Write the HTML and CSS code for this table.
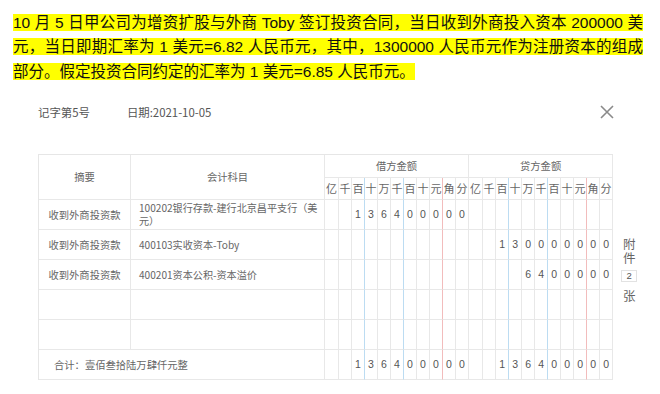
FILE: index.html
```html
<!DOCTYPE html>
<html lang="zh-CN">
<head>
<meta charset="utf-8">
<link rel="stylesheet" href="styles.css">
</head>
<body>
<div class="question">
  <div class="qline full"><span class="hl">10 月 5 日甲公司为增资扩股与外商 Toby 签订投资合同，当日收到外商投入资本 200000 美</span></div>
  <div class="qline full"><span class="hl">元，当日即期汇率为 1 美元=6.82 人民币元，其中，1300000 人民币元作为注册资本的组成</span></div>
  <div class="qline"><span class="hl">部分。假定投资合同约定的汇率为 1 美元=6.85 人民币元。</span></div>
</div>

<div class="vhead">
  <div class="vinfo">
    <span>记字第5号</span>
    <span>日期:2021-10-05</span>
  </div>
  <svg class="close" width="14" height="14" viewBox="0 0 14 14"><path d="M1 1L13 13M13 1L1 13" stroke="#8a8a8a" stroke-width="1.6" fill="none"/></svg>
</div>

<div class="vbody">
  <table class="grid">
    <colgroup>
      <col class="c-sum"><col class="c-subj">
      <col class="c-d1"><col class="c-d"><col class="c-d"><col class="c-d"><col class="c-d"><col class="c-d"><col class="c-d"><col class="c-d"><col class="c-d"><col class="c-d"><col class="c-d">
      <col class="c-d1"><col class="c-d"><col class="c-d"><col class="c-d"><col class="c-d"><col class="c-d"><col class="c-d"><col class="c-d"><col class="c-d"><col class="c-d"><col class="c-d">
    </colgroup>
    <tr class="h1">
      <td class="t" rowspan="2">摘要</td>
      <td class="t" rowspan="2">会计科目</td>
      <td class="t" colspan="11">借方金额</td>
      <td class="t" colspan="11">贷方金额</td>
    </tr>
    <tr class="h2">
      <td class="d">亿</td><td class="d">千</td><td class="d b">百</td><td class="d">十</td><td class="d">万</td><td class="d b">千</td><td class="d">百</td><td class="d">十</td><td class="d r">元</td><td class="d">角</td><td class="d">分</td>
      <td class="d">亿</td><td class="d">千</td><td class="d b">百</td><td class="d">十</td><td class="d">万</td><td class="d b">千</td><td class="d">百</td><td class="d">十</td><td class="d r">元</td><td class="d">角</td><td class="d">分</td>
    </tr>
    <tr class="row">
      <td class="sum">收到外商投资款</td>
      <td class="subj">100202银行存款-建行北京昌平支行（美元）</td>
      <td class="d"></td><td class="d"></td><td class="d b">1</td><td class="d">3</td><td class="d">6</td><td class="d b">4</td><td class="d">0</td><td class="d">0</td><td class="d r">0</td><td class="d">0</td><td class="d">0</td>
      <td class="d"></td><td class="d"></td><td class="d b"></td><td class="d"></td><td class="d"></td><td class="d b"></td><td class="d"></td><td class="d"></td><td class="d r"></td><td class="d"></td><td class="d"></td>
    </tr>
    <tr class="row">
      <td class="sum">收到外商投资款</td>
      <td class="subj">400103实收资本-Toby</td>
      <td class="d"></td><td class="d"></td><td class="d b"></td><td class="d"></td><td class="d"></td><td class="d b"></td><td class="d"></td><td class="d"></td><td class="d r"></td><td class="d"></td><td class="d"></td>
      <td class="d"></td><td class="d"></td><td class="d b">1</td><td class="d">3</td><td class="d">0</td><td class="d b">0</td><td class="d">0</td><td class="d">0</td><td class="d r">0</td><td class="d">0</td><td class="d">0</td>
    </tr>
    <tr class="row">
      <td class="sum">收到外商投资款</td>
      <td class="subj">400201资本公积-资本溢价</td>
      <td class="d"></td><td class="d"></td><td class="d b"></td><td class="d"></td><td class="d"></td><td class="d b"></td><td class="d"></td><td class="d"></td><td class="d r"></td><td class="d"></td><td class="d"></td>
      <td class="d"></td><td class="d"></td><td class="d b"></td><td class="d"></td><td class="d">6</td><td class="d b">4</td><td class="d">0</td><td class="d">0</td><td class="d r">0</td><td class="d">0</td><td class="d">0</td>
    </tr>
    <tr class="row">
      <td class="sum"></td>
      <td class="subj"></td>
      <td class="d"></td><td class="d"></td><td class="d b"></td><td class="d"></td><td class="d"></td><td class="d b"></td><td class="d"></td><td class="d"></td><td class="d r"></td><td class="d"></td><td class="d"></td>
      <td class="d"></td><td class="d"></td><td class="d b"></td><td class="d"></td><td class="d"></td><td class="d b"></td><td class="d"></td><td class="d"></td><td class="d r"></td><td class="d"></td><td class="d"></td>
    </tr>
    <tr class="row">
      <td class="sum"></td>
      <td class="subj"></td>
      <td class="d"></td><td class="d"></td><td class="d b"></td><td class="d"></td><td class="d"></td><td class="d b"></td><td class="d"></td><td class="d"></td><td class="d r"></td><td class="d"></td><td class="d"></td>
      <td class="d"></td><td class="d"></td><td class="d b"></td><td class="d"></td><td class="d"></td><td class="d b"></td><td class="d"></td><td class="d"></td><td class="d r"></td><td class="d"></td><td class="d"></td>
    </tr>
    <tr class="row total">
      <td class="tot" colspan="2">合计：壹佰叁拾陆万肆仟元整</td>
      <td class="d"></td><td class="d"></td><td class="d b">1</td><td class="d">3</td><td class="d">6</td><td class="d b">4</td><td class="d">0</td><td class="d">0</td><td class="d r">0</td><td class="d">0</td><td class="d">0</td>
      <td class="d"></td><td class="d"></td><td class="d b">1</td><td class="d">3</td><td class="d">6</td><td class="d b">4</td><td class="d">0</td><td class="d">0</td><td class="d r">0</td><td class="d">0</td><td class="d">0</td>
    </tr>
  </table>
  <div class="attach">
    <div class="ac">附</div>
    <div class="ac">件</div>
    <div class="count">2</div>
    <div class="ac">张</div>
  </div>
</div>
</body>
</html>
```

FILE: styles.css
```css
html, body {
  margin: 0;
  padding: 0;
  background: #ffffff;
}

body {
  font-family: "Noto Sans CJK SC", "Liberation Sans", sans-serif;
  color: #333;
}

.question {
  width: 630px;
  padding: 11px 0 0 13px;
  font-family: "Liberation Sans", "Noto Sans CJK SC", sans-serif;
  font-size: 15.5px;
  line-height: 24.3px;
  color: #111;
}

.qline {
  white-space: nowrap;
}

.qline.full {
  text-align: justify;
  text-align-last: justify;
}

.hl {
  background: #ffff00;
}

.vhead {
  display: flex;
  align-items: center;
  justify-content: space-between;
  height: 14px;
  margin-top: 21px;
  padding: 0 46px 0 38px;
}

.vinfo {
  display: flex;
  gap: 37px;
  font-size: 11.4px;
  color: #555;
}

.close {
  display: block;
}

.vbody {
  display: flex;
  align-items: flex-start;
  margin-top: 35px;
  padding-left: 38px;
}

.grid {
  table-layout: fixed;
  width: 575px;
  border-collapse: separate;
  border-spacing: 0;
  border-top: 1px solid #e6e6e6;
  border-left: 1px solid #e6e6e6;
  font-size: 10.3px;
  color: #666;
}

.c-sum { width: 92px; }
.c-subj { width: 194px; }
.c-d1 { width: 14px; }
.c-d { width: 13px; }

.grid td {
  padding: 0;
  border-right: 1px solid #e8e8e8;
  border-bottom: 1px solid #e8e8e8;
  text-align: center;
  vertical-align: middle;
  line-height: 13px;
}

.grid .h1 td { height: 22px; }
.grid .h2 td { height: 21px; }
.grid .row td { height: 29px; }

.grid td.d {
  font-family: "Liberation Sans", "Noto Sans CJK SC", sans-serif;
  font-size: 10.5px;
  color: #555;
}

.grid .h2 td.d {
  font-family: "Noto Sans CJK SC", sans-serif;
  font-size: 11px;
  color: #666;
}

.grid td.b { border-right-color: #bcdcf2; }
.grid td.r { border-right-color: #f2bcbc; }

.grid td.subj {
  text-align: left;
  padding: 0 0 0 8px;
  font-size: 10.1px;
}

.grid td.tot {
  text-align: left;
  padding-left: 15px;
}

.attach {
  display: flex;
  flex-direction: column;
  align-items: center;
  width: 16px;
  margin-left: 8px;
  padding-top: 83px;
  font-size: 12.5px;
  color: #666;
}

.ac {
  height: 14px;
  line-height: 14px;
}

.count {
  width: 14px;
  height: 10px;
  margin: 5px 0 7px;
  border: 1px solid #e2e2e2;
  font-family: "Liberation Sans", sans-serif;
  font-size: 9.5px;
  line-height: 10px;
  text-align: center;
  color: #555;
}
```
